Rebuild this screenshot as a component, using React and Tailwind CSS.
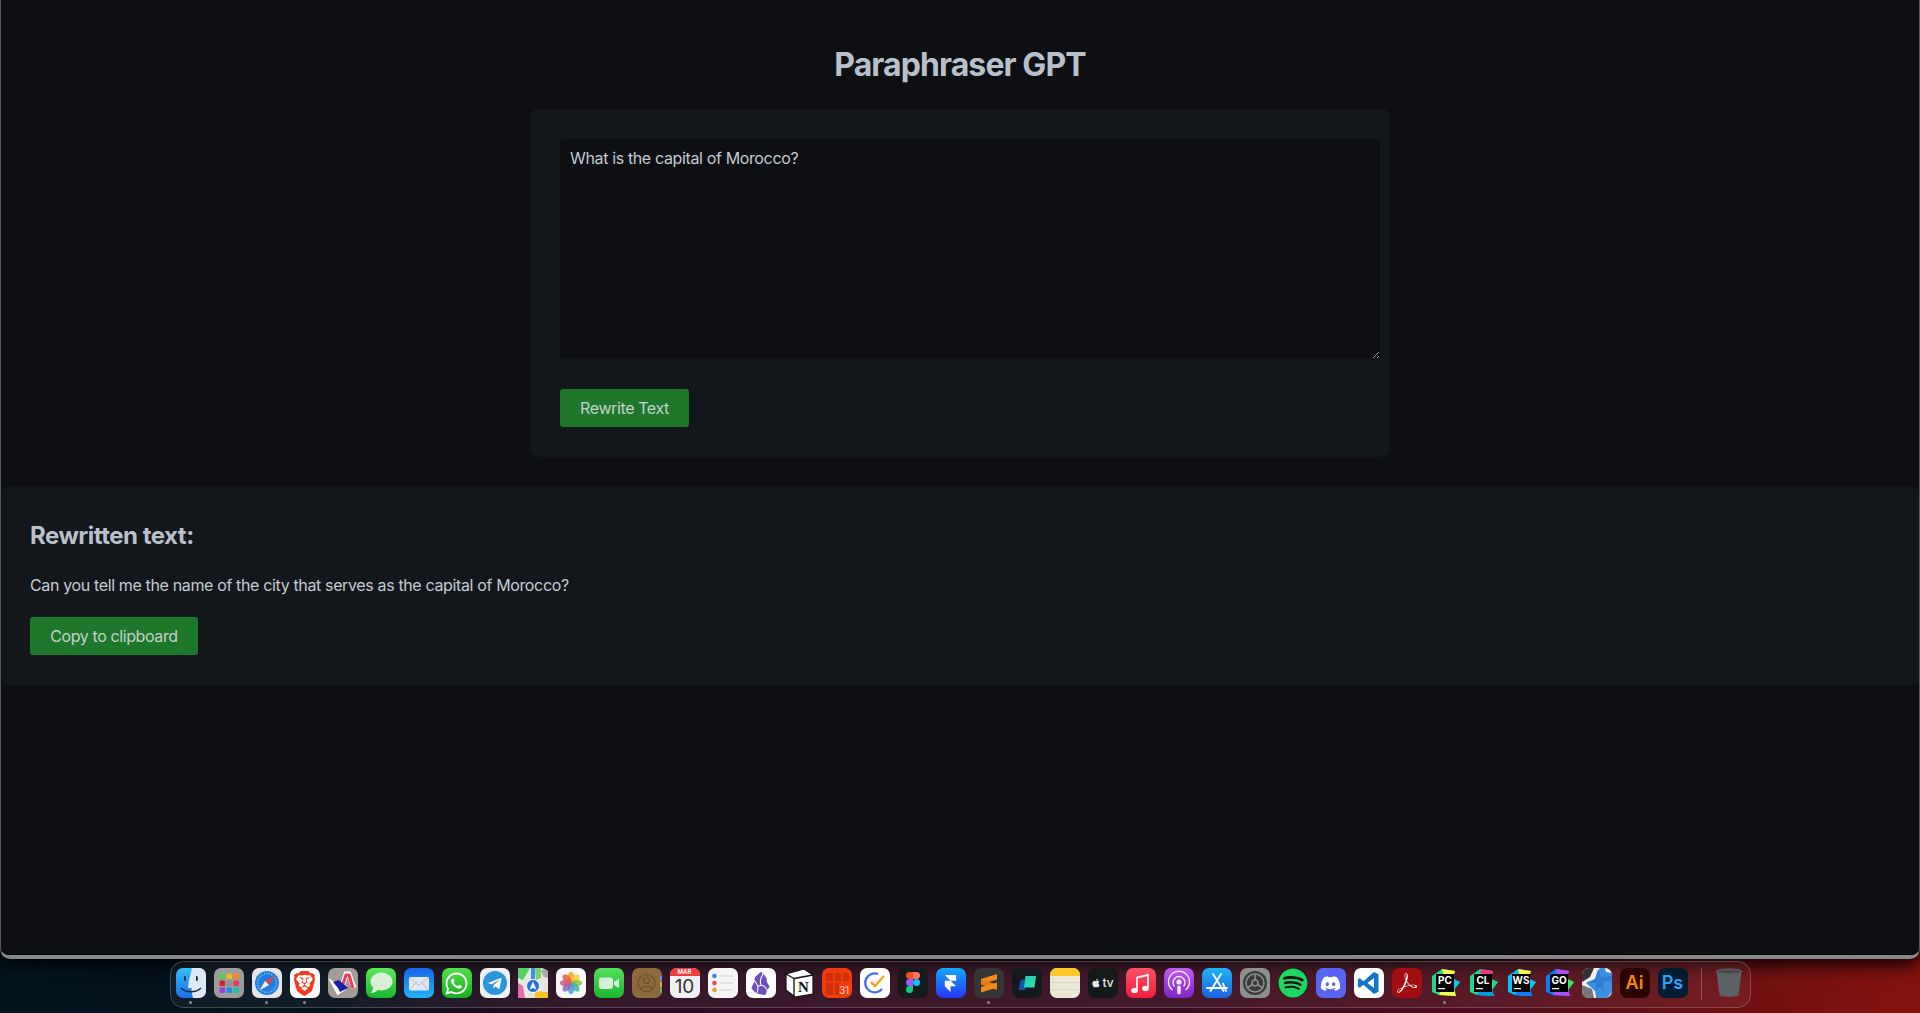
import { FaWhatsapp, FaTelegramPlane, FaSpotify, FaDiscord, FaApple } from "react-icons/fa";
import { SiBrave, SiObsidian, SiFramer, SiAdobeacrobatreader } from "react-icons/si";

function Svg({ children }) {
    return (
        <svg viewBox="0 0 30 30" className="block w-[30px] h-[30px]">
            {children}
        </svg>
    );
}

function Tile({ className, children }) {
    return <div className={`w-[30px] h-[30px] rounded-[7px] overflow-hidden flex items-center justify-center ${className}`}>{children}</div>;
}

function Finder() {
    return (
        <Svg>
            <defs>
                <linearGradient id="fb" x1="0" y1="0" x2="0" y2="1">
                    <stop offset="0" stopColor="#33bdf6" />
                    <stop offset="1" stopColor="#1b6ee6" />
                </linearGradient>
            </defs>
            <rect x="0" y="0" width="30" height="30" rx="7" fill="url(#fb)" />
            <path d="M16 0H23a7 7 0 0 1 7 7V23a7 7 0 0 1-7 7H17C16 26 15.500 23 15.500 20H12C12.500 12 15 6 16 0Z" fill="#dfe8f2" />
            <rect x="8" y="8" width="1.800" height="5" rx=".9" fill="#16263f" />
            <rect x="20" y="8" width="1.800" height="5" rx=".9" fill="#16263f" />
            <path d="M5 20C10 25 20 25 25 20" stroke="#16263f" strokeWidth="1.300" fill="none" />
        </Svg>
    );
}

function Launchpad() {
    const colors = ["#4fd04f", "#f5b81f", "#f08a1c", "#d8202c", "#8c9496", "#ef3466", "#9a3fd8", "#1e8df2", "#22c2a0"];
    return (
        <Svg>
            <rect width="30" height="30" rx="7" fill="#9c9c9c" />
            {colors.map((c, i) => (
                <rect key={c} x={5.500 + (i % 3) * 7} y={5.500 + Math.floor(i / 3) * 7} width="5.500" height="5.500" rx="1.200" fill={c} />
            ))}
        </Svg>
    );
}

function Safari() {
    const ticks = Array.from({ length: 24 }, (_, i) => i * 15);
    return (
        <Svg>
            <rect width="30" height="30" rx="7" fill="#e6e6e8" />
            <circle cx="15" cy="15" r="12" fill="#1f7fe0" />
            {ticks.map((a) => (
                <rect key={a} x="14.800" y="4.500" width=".5" height="2" fill="#dcebfa" transform={`rotate(${a} 15 15)`} />
            ))}
            <path d="M22.500 7.500L13 13L17 17Z" fill="#ef3a3a" />
            <path d="M7.500 22.500L13 13L17 17Z" fill="#f2f2f2" />
        </Svg>
    );
}

function Brave() {
    return (
        <Tile className="bg-white">
            <SiBrave className="w-[25px] h-[25px] text-[#f53a1c]" />
        </Tile>
    );
}

function ArcApp() {
    return (
        <Svg>
            <rect width="30" height="30" rx="7" fill="#a39a9a" />
            <path d="M13 22L18 6L21 6L26 20" stroke="#fff" strokeWidth="5" fill="none" />
            <path d="M4 14L16 21L10 25Z" fill="#fff" stroke="#fff" strokeWidth="3" />
            <path d="M13 22L18 7L21 7L25 20" stroke="#f23a55" strokeWidth="3" fill="none" />
            <path d="M5 14L11 12L20 20L12 24L10 20Z" fill="#1520a8" />
        </Svg>
    );
}

function Messages() {
    return (
        <Svg>
            <defs>
                <linearGradient id="mg" x1="0" y1="0" x2="0" y2="1">
                    <stop offset="0" stopColor="#5ce85a" />
                    <stop offset="1" stopColor="#19b82e" />
                </linearGradient>
            </defs>
            <rect width="30" height="30" rx="7" fill="url(#mg)" />
            <ellipse cx="15.500" cy="13.500" rx="11" ry="9" fill="#d8eed8" />
            <path d="M7 18.500C7 22 6 24 4.500 25C8 25 10.500 23.500 12 21.500Z" fill="#d8eed8" />
        </Svg>
    );
}

function Mail() {
    return (
        <Svg>
            <defs>
                <linearGradient id="ml" x1="0" y1="0" x2="0" y2="1">
                    <stop offset="0" stopColor="#1766e8" />
                    <stop offset="1" stopColor="#22b2f8" />
                </linearGradient>
            </defs>
            <rect width="30" height="30" rx="7" fill="url(#ml)" />
            <rect x="5" y="9" width="20" height="13.500" rx="1.500" fill="#e2e6ee" />
            <path d="M5.500 9.500L15 17L24.500 9.500M5.500 22L12 14.500M24.500 22L18 14.500" stroke="#a9b3c4" strokeWidth=".7" fill="none" />
        </Svg>
    );
}

function WhatsApp() {
    return (
        <Tile className="bg-[linear-gradient(180deg,#52e04a,#16b01f)]">
            <FaWhatsapp className="w-[25px] h-[25px] text-white" />
        </Tile>
    );
}

function Telegram() {
    return (
        <Svg>
            <rect width="30" height="30" rx="7" fill="#eef0f2" />
            <circle cx="15" cy="15" r="12" fill="#2a94dc" />
            <foreignObject x="7.500" y="7.500" width="14" height="15">
                <FaTelegramPlane className="w-[14px] h-[15px] text-white" />
            </foreignObject>
        </Svg>
    );
}

function Maps() {
    return (
        <Svg>
            <rect width="30" height="30" rx="7" fill="#e7e7dc" />
            <path d="M0 0H12L5 12L0 10Z" fill="#57cf63" />
            <path d="M17 0H23V10L18 12Z" fill="#79d66f" />
            <path d="M0 15L5 18L7 30H0Z" fill="#e46bb0" />
            <path d="M17 23L30 24V30H17Z" fill="#f5c425" />
            <path d="M13 0H17L17 12H13Z" fill="#3f8ee9" />
            <path d="M23 3A4 4 0 0 1 30 8V10L26 9Z" fill="#a7a9ab" />
            <circle cx="15" cy="18" r="6.500" fill="#1f6fe2" stroke="#fff" strokeWidth="1" />
            <path d="M15 13.500L18.500 21.500L15 20L11.500 21.500Z" fill="#fff" />
        </Svg>
    );
}

function Photos() {
    const petals = [
        ["#f6a01e", 0],
        ["#f6cf2a", 45],
        ["#8dc63f", 90],
        ["#3fb49a", 135],
        ["#4c9ce0", 180],
        ["#8a6fc4", 225],
        ["#c45b98", 270],
        ["#ea5a4c", 315],
    ];
    return (
        <Svg>
            <rect width="30" height="30" rx="7" fill="#f7f7f7" />
            {petals.map(([c, a]) => (
                <ellipse key={a} cx="15" cy="9.500" rx="3.300" ry="5.700" fill={c} opacity=".85" transform={`rotate(${a} 15 15)`} />
            ))}
        </Svg>
    );
}

function FaceTime() {
    return (
        <Svg>
            <defs>
                <linearGradient id="ft" x1="0" y1="0" x2="0" y2="1">
                    <stop offset="0" stopColor="#55e05c" />
                    <stop offset="1" stopColor="#1ab52e" />
                </linearGradient>
            </defs>
            <rect width="30" height="30" rx="7" fill="url(#ft)" />
            <rect x="5" y="9.500" width="14" height="11.500" rx="3" fill="#d9eeda" />
            <path d="M20 14L25 10.500V20L20 17Z" fill="#d9eeda" />
        </Svg>
    );
}

function Contacts() {
    return (
        <Svg>
            <rect width="30" height="30" rx="7" fill="#8c6a3c" />
            <rect x="28" y="8" width="2" height="5" fill="#5a9ae0" />
            <rect x="28" y="14" width="2" height="5" fill="#e0a83c" />
            <rect x="28" y="20" width="2" height="5" fill="#58b85c" />
            <circle cx="14.500" cy="15" r="8.500" fill="none" stroke="#6b5030" strokeWidth="1.200" />
            <circle cx="14.500" cy="12.500" r="3" fill="none" stroke="#6b5030" strokeWidth="1.200" />
            <path d="M8.500 21C10 17.500 19 17.500 20.500 21" fill="none" stroke="#6b5030" strokeWidth="1.200" />
        </Svg>
    );
}

function Calendar() {
    return (
        <div className="relative w-[30px] h-[30px] rounded-[7px] overflow-hidden bg-[#f1f1f1] flex flex-col items-center">
            <div className="w-full h-[8px] bg-[#ee3b3b] text-white text-[6px] font-semibold leading-[8px] text-center">MAR</div>
            <div className="text-[#333] text-[19px] leading-[22px]">10</div>
        </div>
    );
}

function Reminders() {
    return (
        <Svg>
            <rect width="30" height="30" rx="7" fill="#f5f5f5" />
            {[
                ["#3b82e8", 8],
                ["#ee4444", 15],
                ["#f09a28", 22],
            ].map(([c, y]) => (
                <g key={y}>
                    <circle cx="6.500" cy={y} r="2.300" fill={c} />
                    <rect x="11" y={y - 0.4} width="14" height=".8" fill="#c8c8c8" />
                </g>
            ))}
        </Svg>
    );
}

function Obsidian() {
    return (
        <Tile className="bg-white">
            <SiObsidian className="w-[23px] h-[23px] text-[#6b4fc0]" />
        </Tile>
    );
}

function Notion() {
    return (
        <Svg>
            <path d="M2 6L20 1L29 7V26L11 29L2 22Z" fill="#fff" stroke="#111" strokeWidth="1.200" />
            <path d="M10 10.500L29 7M10 10.500V29M2 6L10 10.500" fill="none" stroke="#111" strokeWidth="1.300" />
            <text x="19.500" y="23.500" textAnchor="middle" fontFamily="Liberation Serif, serif" fontWeight="700" fontSize="15" fill="#111">N</text>
        </Svg>
    );
}

function RedCal() {
    return (
        <Svg>
            <rect width="30" height="30" rx="7" fill="#f23c0f" />
            <path d="M4 5H11V13H4ZM13 5H19V13H13ZM21 5H27V13H21ZM4 15H11V27H4ZM13 15H17V27H13Z" fill="#cf3208" />
            <text x="22" y="26" textAnchor="middle" fontFamily="Inter, sans-serif" fontSize="10" fill="#ffd8c8">31</text>
        </Svg>
    );
}

function TickTick() {
    return (
        <Svg>
            <rect width="30" height="30" rx="7" fill="#fff" />
            <path d="M22 21A9.500 9.500 0 1 1 18 6" fill="none" stroke="#4a6cf0" strokeWidth="2.300" />
            <path d="M11 14L15 18L24 8" fill="none" stroke="#f5a623" strokeWidth="2.500" />
        </Svg>
    );
}

function Figma() {
    return (
        <Svg>
            <rect width="30" height="30" rx="7" fill="#171a1d" />
            <path d="M15 4H11.500a3.500 3.500 0 0 0 0 7H15Z" fill="#f24e1e" />
            <path d="M15 4H18.500a3.500 3.500 0 0 1 0 7H15Z" fill="#ff7262" />
            <path d="M15 11H11.500a3.500 3.500 0 0 0 0 7H15Z" fill="#a259ff" />
            <circle cx="18.500" cy="14.500" r="3.500" fill="#1abcfe" />
            <path d="M11.500 18H15V21.500a3.500 3.500 0 1 1-3.500-3.500Z" fill="#0acf83" />
        </Svg>
    );
}

function Framer() {
    return (
        <Tile className="bg-[linear-gradient(180deg,#12a8fa,#2438f2)]">
            <SiFramer className="w-[17px] h-[19px] text-white" />
        </Tile>
    );
}

function Sublime() {
    return (
        <Svg>
            <rect width="30" height="30" rx="7" fill="#353535" />
            <path d="M23 6V11.500L7 16.500V11Z" fill="#f28a1b" />
            <path d="M7 11.500L23 16.500V22L7 16.500Z" fill="#e07e16" />
            <path d="M23 14.500V19.500L7 24.500V19Z" fill="#f28a1b" />
        </Svg>
    );
}

function ShapeApp() {
    return (
        <Svg>
            <defs>
                <linearGradient id="sa" x1="0" y1="0" x2="1" y2="1">
                    <stop offset="0" stopColor="#1cc6c0" />
                    <stop offset="1" stopColor="#38e8a0" />
                </linearGradient>
            </defs>
            <rect width="30" height="30" rx="7" fill="#14191d" />
            <path d="M9 11.500H15L13 22H6.500Z" fill="#1254a8" />
            <path d="M13.500 8H24L22.500 19.500H12Z" fill="url(#sa)" />
        </Svg>
    );
}

function Notes() {
    return (
        <Svg>
            <rect width="30" height="30" rx="7" fill="#ece8d8" />
            <path d="M0 7a7 7 0 0 1 7-7H23a7 7 0 0 1 7 7V8H0Z" fill="#fcc82c" />
            <rect y="14" width="30" height=".6" fill="#cfcaba" />
            <rect y="21" width="30" height=".6" fill="#cfcaba" />
        </Svg>
    );
}

function AppleTv() {
    return (
        <Tile className="bg-[#15191a] text-[#e8e8e8] gap-[1px]">
            <FaApple className="w-[10px] h-[10px]" />
            <span className="text-[12px] font-['Inter'] font-medium leading-none">tv</span>
        </Tile>
    );
}

function Music() {
    return (
        <Svg>
            <defs>
                <linearGradient id="mu" x1="0" y1="0" x2="0" y2="1">
                    <stop offset="0" stopColor="#fb4f66" />
                    <stop offset="1" stopColor="#f01f3c" />
                </linearGradient>
            </defs>
            <rect width="30" height="30" rx="7" fill="url(#mu)" />
            <path d="M11 9.500L22 7V20" fill="none" stroke="#f5f0f0" strokeWidth="1.800" />
            <path d="M11 9V22.500" stroke="#f5f0f0" strokeWidth="1.800" />
            <ellipse cx="8.500" cy="22.500" rx="3.300" ry="2.700" fill="#f5f0f0" />
            <ellipse cx="19.500" cy="20.500" rx="3.300" ry="2.700" fill="#f5f0f0" />
        </Svg>
    );
}

function Podcasts() {
    return (
        <Svg>
            <defs>
                <linearGradient id="po" x1="0" y1="0" x2="0" y2="1">
                    <stop offset="0" stopColor="#c05cf0" />
                    <stop offset="1" stopColor="#7a25c8" />
                </linearGradient>
            </defs>
            <rect width="30" height="30" rx="7" fill="url(#po)" />
            <path d="M8.500 22A10.500 10.500 0 1 1 21.500 22" fill="none" stroke="#f4e8fb" strokeWidth="1.400" />
            <path d="M10.500 18.500A6 6 0 1 1 19.500 18.500" fill="none" stroke="#f4e8fb" strokeWidth="1.400" />
            <circle cx="15" cy="14" r="2.600" fill="#f4e8fb" />
            <rect x="13.200" y="17.500" width="3.600" height="9" rx="1.800" fill="#f4e8fb" />
        </Svg>
    );
}

function AppStore() {
    return (
        <Svg>
            <defs>
                <linearGradient id="as" x1="0" y1="0" x2="0" y2="1">
                    <stop offset="0" stopColor="#1fb4f6" />
                    <stop offset="1" stopColor="#1a62e0" />
                </linearGradient>
            </defs>
            <rect width="30" height="30" rx="7" fill="url(#as)" />
            <path d="M11 6L21.500 23M19 6L8.500 23M5 20H25M21 15.500L24 23" stroke="#fff" strokeWidth="1.800" strokeLinecap="round" fill="none" />
        </Svg>
    );
}

function Settings() {
    return (
        <Svg>
            <rect width="30" height="30" rx="7" fill="#8d8f8e" />
            <circle cx="15" cy="15" r="12" fill="#3a3a3a" />
            <circle cx="15" cy="15" r="9" fill="none" stroke="#8d8f8e" strokeWidth="1.500" />
            <circle cx="15" cy="15" r="3" fill="none" stroke="#8d8f8e" strokeWidth="1.500" />
            <path d="M15 12V6.500M12.500 16.500L7.800 19.500M17.500 16.500L22.200 19.500" stroke="#8d8f8e" strokeWidth="1.500" />
        </Svg>
    );
}

function Spotify() {
    return (
        <div className="w-[30px] h-[30px] rounded-full bg-[#111] flex items-center justify-center">
            <FaSpotify className="w-[30px] h-[30px] text-[#1ed760]" />
        </div>
    );
}

function Discord() {
    return (
        <Tile className="bg-[#5865f2]">
            <FaDiscord className="w-[21px] h-[21px] text-white" />
        </Tile>
    );
}

function VsCode() {
    return (
        <Svg>
            <rect width="30" height="30" rx="7" fill="#fff" />
            <path d="M20 4L24.500 6.200V23.800L20 26L9.500 16.800L5.800 19.800L3.800 18.500V11.500L5.800 10.200L9.500 13.200ZM20 10L13.500 15L20 20Z" fill="#1276c8" />
        </Svg>
    );
}

function Acrobat() {
    return (
        <Tile className="bg-[#a30d10]">
            <SiAdobeacrobatreader className="w-[20px] h-[20px] text-white" />
        </Tile>
    );
}

function JetBrains({ label, colors }) {
    return (
        <Svg>
            <path d="M2 8L12 1L25 3L22 13L30 14L24 22L26 28L9 27L2 24Z" fill={colors[0]} />
            <path d="M12 1L25 3L22 13L14 9Z" fill={colors[1]} />
            <path d="M9 27L26 28L24 20L12 20Z" fill={colors[2]} />
            <path d="M22 10L30 14L24 22Z" fill={colors[3]} />
            <rect x="6" y="6" width="18" height="18" fill="#000" />
            <text x="15" y="15.500" textAnchor="middle" fontFamily="Inter, sans-serif" fontWeight="700" fontSize="10" fill="#fff">{label}</text>
            <rect x="8" y="20" width="7" height="1.200" fill="#fff" />
        </Svg>
    );
}

function StarApp() {
    return (
        <Svg>
            <rect width="30" height="30" rx="7" fill="#f2f2f2" />
            <path d="M0 7a7 7 0 0 1 7-7H12L8 9L0 14Z" fill="#333" />
            <path d="M0 17L10 21L12 30H7a7 7 0 0 1-7-7Z" fill="#777" />
            <path d="M18 0H23L24 4L30 5V24L25 30H14L13 23L4 15L13 11L16 2Z" fill="#3f8fe0" />
            <path d="M16 2L19 9L30 8V12L21 14L22 24L18 19L13 23L14 15L4 15L13 11Z" fill="#2f7ed6" />
        </Svg>
    );
}

function AdobeTile({ label, bg, fg }) {
    return (
        <Tile className={bg}>
            <span className={`font-['Inter'] text-[18px] font-semibold leading-none ${fg}`}>{label}</span>
        </Tile>
    );
}

function Trash() {
    return (
        <Svg>
            <ellipse cx="15" cy="3.500" rx="13" ry="2.500" fill="#454b50" stroke="#7a7f84" strokeWidth=".6" />
            <path d="M2.500 4L5.500 27C6 29.500 24 29.500 24.500 27L27.500 4C22 6.500 8 6.500 2.500 4Z" fill="#5c6166" />
        </Svg>
    );
}

const dockApps = [
    { id: "finder", el: <Finder />, dot: true },
    { id: "launchpad", el: <Launchpad /> },
    { id: "safari", el: <Safari />, dot: true },
    { id: "brave", el: <Brave />, dot: true },
    { id: "arc", el: <ArcApp /> },
    { id: "messages", el: <Messages /> },
    { id: "mail", el: <Mail /> },
    { id: "whatsapp", el: <WhatsApp /> },
    { id: "telegram", el: <Telegram /> },
    { id: "maps", el: <Maps /> },
    { id: "photos", el: <Photos /> },
    { id: "facetime", el: <FaceTime /> },
    { id: "contacts", el: <Contacts /> },
    { id: "calendar", el: <Calendar /> },
    { id: "reminders", el: <Reminders /> },
    { id: "obsidian", el: <Obsidian /> },
    { id: "notion", el: <Notion /> },
    { id: "redcal", el: <RedCal /> },
    { id: "ticktick", el: <TickTick /> },
    { id: "figma", el: <Figma /> },
    { id: "framer", el: <Framer /> },
    { id: "sublime", el: <Sublime />, dot: true },
    { id: "shape", el: <ShapeApp /> },
    { id: "notes", el: <Notes /> },
    { id: "tv", el: <AppleTv /> },
    { id: "music", el: <Music /> },
    { id: "podcasts", el: <Podcasts /> },
    { id: "appstore", el: <AppStore /> },
    { id: "settings", el: <Settings /> },
    { id: "spotify", el: <Spotify /> },
    { id: "discord", el: <Discord /> },
    { id: "vscode", el: <VsCode /> },
    { id: "acrobat", el: <Acrobat /> },
    { id: "pc", el: <JetBrains label="PC" colors={["#21d789", "#fcf84a", "#fcf84a", "#07c3f2"]} />, dot: true },
    { id: "cl", el: <JetBrains label="CL" colors={["#21d789", "#ed358c", "#009ae5", "#21d789"]} /> },
    { id: "ws", el: <JetBrains label="WS" colors={["#07c3f2", "#fcf84a", "#087cfa", "#07c3f2"]} /> },
    { id: "go", el: <JetBrains label="GO" colors={["#087cfa", "#b74af7", "#b74af7", "#3bea62"]} /> },
    { id: "star", el: <StarApp /> },
    { id: "ai", el: <AdobeTile label="Ai" bg="bg-[#2b0300]" fg="text-[#ff8a00]" /> },
    { id: "ps", el: <AdobeTile label="Ps" bg="bg-[#001c33]" fg="text-[#2fa3f7]" /> },
];

function Dock() {
    return (
        <div className="mx-auto mt-[2px] w-[1581px] h-[47px] rounded-[14px] border border-white/20 bg-white/5 pl-[5px] pt-[6px] flex">
            <div className="flex gap-[8px]">
                {dockApps.map((app) => (
                    <div key={app.id} className="relative w-[30px] h-[30px]">
                        {app.el}
                        {app.dot && <span className="absolute left-[13px] top-[33px] w-[3px] h-[3px] rounded-full bg-[#8d8689]" />}
                    </div>
                ))}
            </div>
            <div className="ml-[13px] w-px h-[32px] bg-white/25" />
            <div className="ml-[12px] w-[30px] h-[30px]">
                <Trash />
            </div>
        </div>
    );
}

export default function App() {
    return (
        <div className="h-[1013px] overflow-hidden flex flex-col bg-[linear-gradient(90deg,#03141f_0%,#05101c_17%,#2a0b1f_30%,#390c20_60%,#4f0e1c_78%,#86120c_100%)] font-['Inter',sans-serif]">
            <div className="h-[959px] shrink-0 rounded-b-[10px] border-x border-b-[4px] border-x-[#55585c] border-b-[#85888a] bg-[#0d0f13] shadow-[0_6px_18px_rgba(0,0,0,0.9)]">
                <div className="h-full rounded-b-[8px] border-b border-[#000] flex flex-col">
                    <h1 className="mt-[45px] mb-[25px] text-center text-[32px] leading-[39px] font-bold tracking-[-0.9px] text-[#b8c0cc]">Paraphraser GPT</h1>
                    <div className="mx-auto w-[860px] rounded-[8px] bg-[#13171b] p-[30px]">
                        <textarea
                            readOnly
                            defaultValue="What is the capital of Morocco?"
                            className="block w-[820px] h-[220px] rounded-[5px] bg-[#0d0f13] p-[10px] text-base leading-[19px] tracking-[-0.36px] text-[#c4cbd3] outline-none"
                        />
                        <button type="button" className="mt-[30px] block w-[129px] h-[38px] rounded-[3px] bg-[#1f772b] text-base tracking-[-0.4px] text-[#c6d2ca]">
                            Rewrite Text
                        </button>
                    </div>
                    <section className="mt-[30px] ml-px h-[198px] rounded-[5px] bg-[#13171b] px-[28px] pt-[31px]">
                        <h2 className="mb-[19px] text-2xl leading-9 font-bold tracking-[-0.5px] text-[#b8c0cc]">Rewritten text:</h2>
                        <p className="mb-5 text-base leading-6 tracking-[-0.36px] text-[#c4cbd3]">Can you tell me the name of the city that serves as the capital of Morocco?</p>
                        <button type="button" className="block w-[168px] h-[38px] rounded-[3px] bg-[#1f772b] text-base tracking-[-0.4px] text-[#c6d2ca]">
                            Copy to clipboard
                        </button>
                    </section>
                </div>
            </div>
            <Dock />
        </div>
    );
}
